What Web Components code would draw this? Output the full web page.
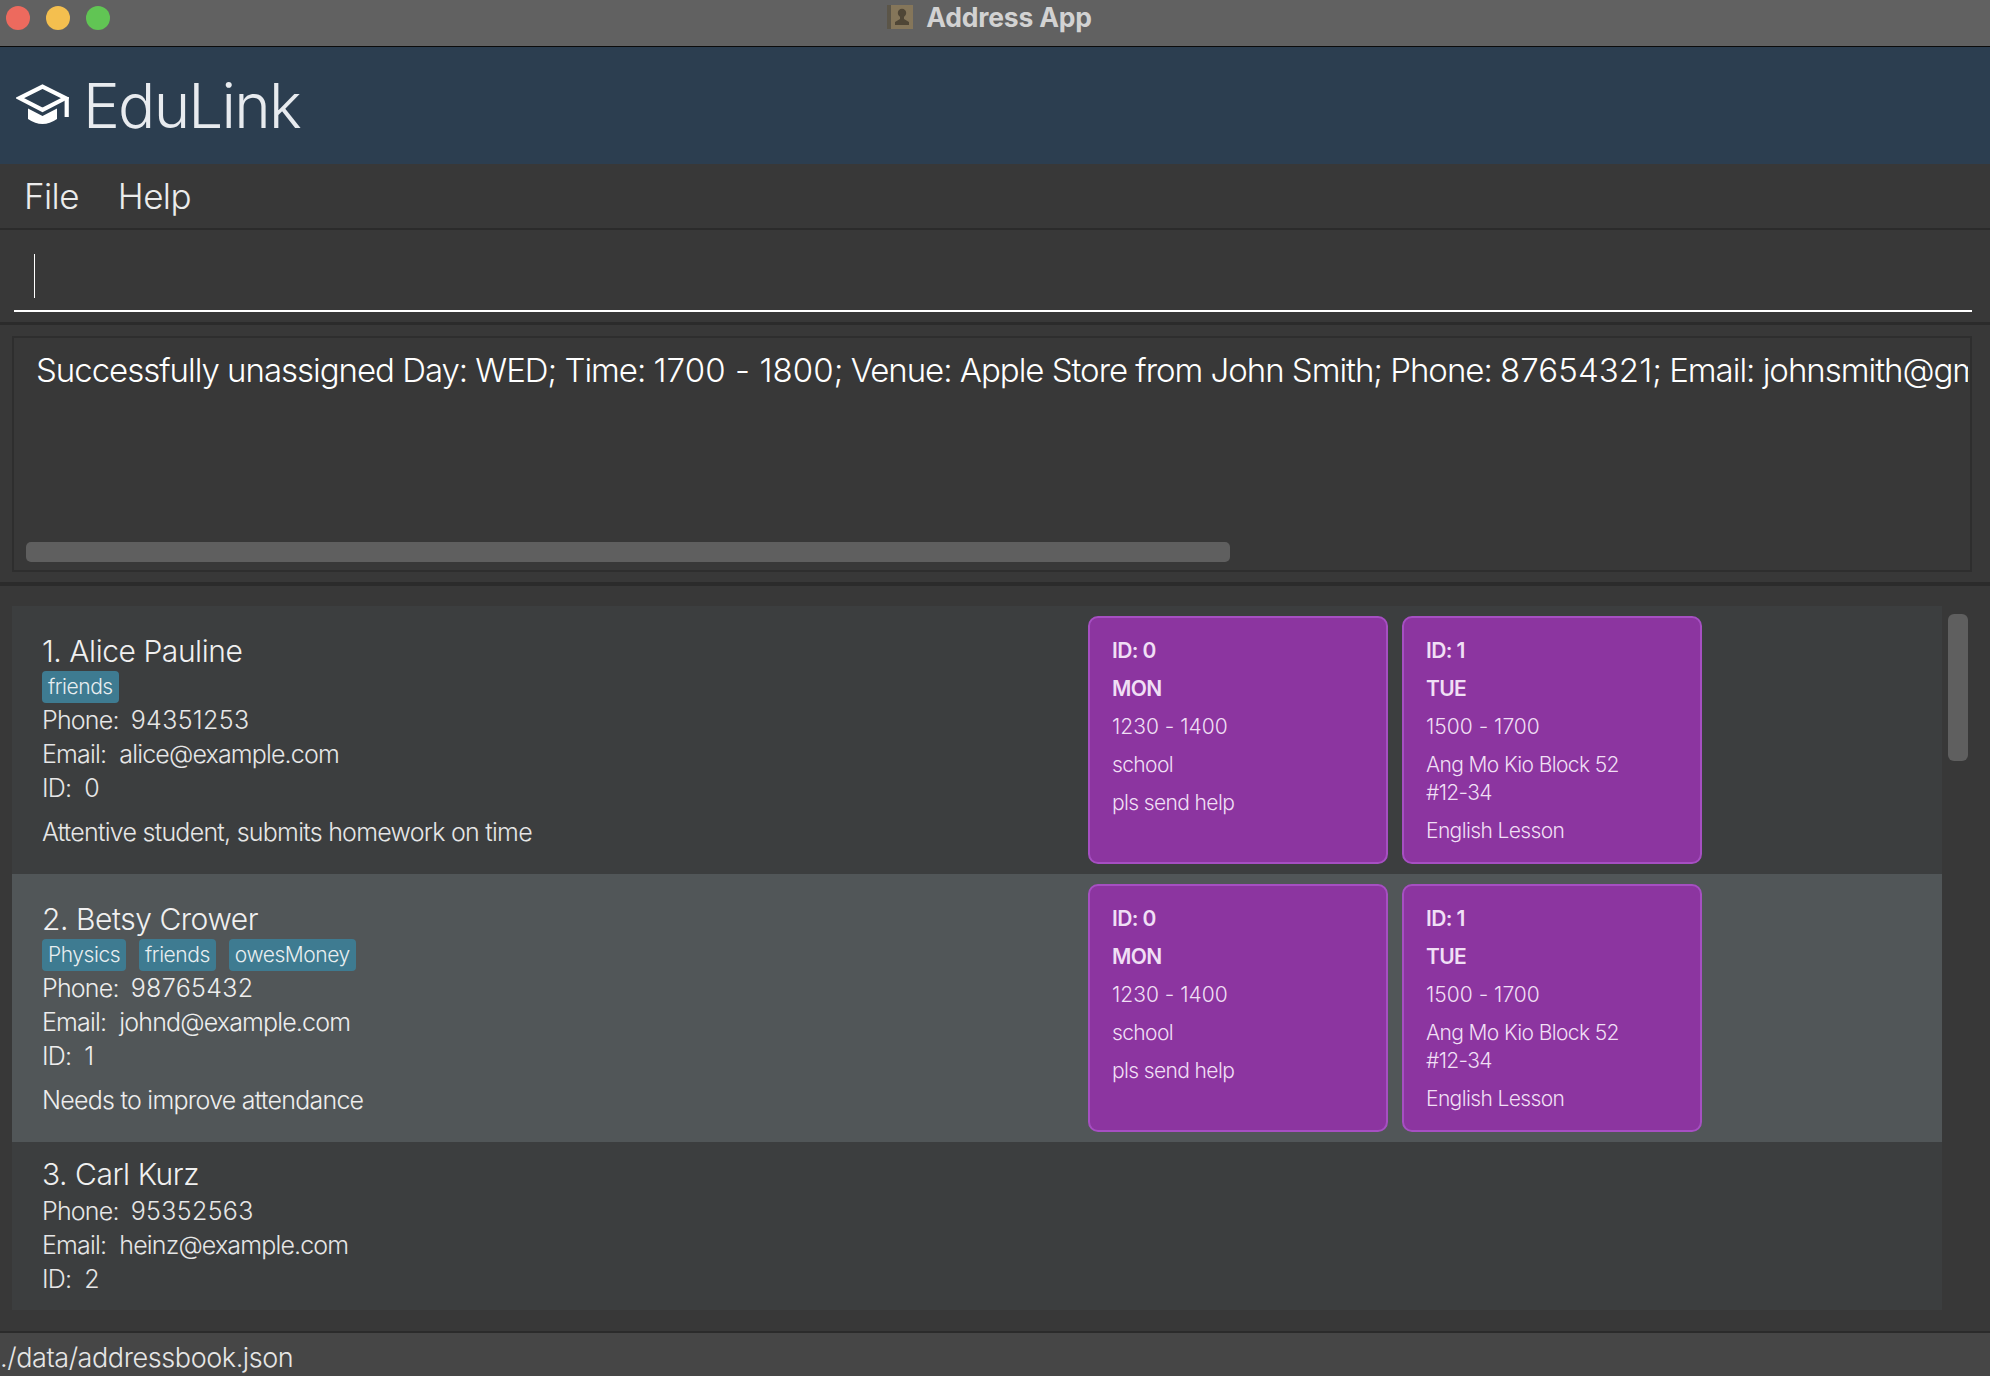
<!DOCTYPE html>
<html>
<head>
<meta charset="utf-8">
<title>Address App</title>
<style>
  html, body { margin: 0; height: 100%; background: #383838; overflow: hidden; }
  body { font-family: Inter, "Noto Sans", "Liberation Sans", sans-serif; font-weight: 300; color: #fff; }
</style>
</head>
<body>
<edu-app>
  <title-bar title="Address App"></title-bar>
  <brand-header name="EduLink"></brand-header>
  <menu-bar><span>File</span><span>Help</span></menu-bar>
  <command-box></command-box>
  <result-display>Successfully unassigned Day: WED; Time: <span>1700 - 1800</span>; Venue: Apple Store from John Smith; Phone: <span>87654321</span>; Email: johnsmith@gmail.com</result-display>
  <person-list>
    <person-card index="1" name="Alice Pauline" tags="friends" phone="94351253" email="alice@example.com" pid="0" note="Attentive student, submits homework on time">
      <lesson-card slot="lessons" lid="0" day="MON" time="1230 - 1400" venue="school" subject="pls send help"></lesson-card>
      <lesson-card slot="lessons" lid="1" day="TUE" time="1500 - 1700" venue="Ang Mo Kio Block 52 #12-34" subject="English Lesson"></lesson-card>
    </person-card>
    <person-card alt index="2" name="Betsy Crower" tags="Physics,friends,owesMoney" phone="98765432" email="johnd@example.com" pid="1" note="Needs to improve attendance">
      <lesson-card slot="lessons" lid="0" day="MON" time="1230 - 1400" venue="school" subject="pls send help"></lesson-card>
      <lesson-card slot="lessons" lid="1" day="TUE" time="1500 - 1700" venue="Ang Mo Kio Block 52 #12-34" subject="English Lesson"></lesson-card>
    </person-card>
    <person-card short index="3" name="Carl Kurz" phone="95352563" email="heinz@example.com" pid="2"></person-card>
  </person-list>
  <status-bar>./data/addressbook.json</status-bar>
</edu-app>

<script>
class EduApp extends HTMLElement {
  constructor() {
    super();
    this.attachShadow({ mode: 'open' }).innerHTML = `
      <style>
        :host { display: flex; flex-direction: column; width: 1990px; height: 1376px; overflow: hidden; }
      </style>
      <slot></slot>
    `;
  }
}

class TitleBar extends HTMLElement {
  constructor() {
    super();
    this.attachShadow({ mode: 'open' }).innerHTML = `
      <style>
        :host { display: block; height: 46px; flex: none; background: #616161; border-bottom: 1px solid #0c0c0c; position: relative; }
        .dots { position: absolute; left: 6px; top: 6px; display: flex; gap: 16px; }
        .dots i { width: 24px; height: 24px; border-radius: 50%; display: block; }
        .center { display: flex; justify-content: center; align-items: center; height: 34px; gap: 12px; padding-right: 12px; }
        .name { font: 700 26.5px Inter, sans-serif; color: #d2d2d2; letter-spacing: -0.2px; }
        svg { display: block; }
      </style>
      <div class="dots">
        <i style="background:#ed6a5e"></i><i style="background:#f4bf4f"></i><i style="background:#61c554"></i>
      </div>
      <div class="center">
        <svg width="28" height="26" viewBox="0 0 28 26">
          <rect x="1" y="1" width="26" height="24" fill="#85765a"/>
          <rect x="1" y="1" width="4" height="24" fill="#5b5548"/>
          <circle cx="16" cy="9" r="4.2" fill="#4f4636"/>
          <path d="M14 12h4v3l5 3v3H9v-3l5-3z" fill="#4f4636"/>
        </svg>
        <span class="name">${this.getAttribute('title')}</span>
      </div>
    `;
  }
}

class BrandHeader extends HTMLElement {
  constructor() {
    super();
    this.attachShadow({ mode: 'open' }).innerHTML = `
      <style>
        :host { display: flex; align-items: center; height: 117px; flex: none; background: #2c3e50; padding-left: 16px; gap: 14px; box-sizing: border-box; }
        svg { display: block; flex: none; margin-top: -2px; }
        .name { font-size: 62px; font-weight: 300; color: #e8ebef; letter-spacing: -1.8px; line-height: 1; }
      </style>
      <svg width="53" height="41" viewBox="16 85 53 41">
        <path d="M42.5 87.6 65.5 99 42.5 110.8 19.5 99Z" fill="none" stroke="#fff" stroke-width="4.2"/>
        <rect x="64.6" y="98" width="4.2" height="20" fill="#fff"/>
        <path d="M28 109.5 42.5 117 57 109.5V120Q42.5 130 28 120Z" fill="#fff"/>
      </svg>
      <span class="name">${this.getAttribute('name')}</span>
    `;
  }
}

class MenuBar extends HTMLElement {
  constructor() {
    super();
    this.attachShadow({ mode: 'open' }).innerHTML = `
      <style>
        :host { display: flex; align-items: center; height: 66px; flex: none; box-sizing: border-box; background: #383838; border-bottom: 2px solid #2b2b2b; padding-left: 24px; gap: 39px; font-size: 35px; font-weight: 300; color: #ececec; letter-spacing: -0.6px; }
      </style>
      <slot></slot>
    `;
  }
}

class CommandBox extends HTMLElement {
  constructor() {
    super();
    this.attachShadow({ mode: 'open' }).innerHTML = `
      <style>
        :host { display: block; height: 95px; flex: none; box-sizing: border-box; background: #383838; border-bottom: 3px solid #2b2b2b; padding: 24px 18px 0 14px; }
        .field { height: 58px; box-sizing: border-box; border-bottom: 2px solid #fff; padding: 0 0 12px 20px; }
        .caret { display: block; width: 1px; height: 44px; background: #fff; }
      </style>
      <div class="field"><span class="caret"></span></div>
    `;
  }
}

class ResultDisplay extends HTMLElement {
  constructor() {
    super();
    this.attachShadow({ mode: 'open' }).innerHTML = `
      <style>
        :host { display: block; height: 261px; flex: none; box-sizing: border-box; background: #383838; border-bottom: 4px solid #2b2b2b; padding: 11px 18px 10px 12px; }
        .box { height: 236px; box-sizing: border-box; border: 2px solid #2e2e2e; display: flex; flex-direction: column; padding: 0 2px 8px 13px; }
        .text { flex: 1; min-height: 0; overflow: hidden; white-space: nowrap; padding: 10px 0 0 9px; font-size: 33px; font-weight: 300; line-height: 44px; color: #fff; letter-spacing: -1.02px; }
        ::slotted(span) { letter-spacing: 0.1px; }
        .thumb { width: 1204px; height: 20px; flex: none; background: #5f5f5f; border-radius: 5px; margin-left: -1px; }
      </style>
      <div class="box">
        <div class="text"><slot></slot></div>
        <div class="thumb"></div>
      </div>
    `;
  }
}

class PersonList extends HTMLElement {
  constructor() {
    super();
    this.attachShadow({ mode: 'open' }).innerHTML = `
      <style>
        :host { display: flex; height: 745px; flex: none; box-sizing: border-box; background: #383838; padding: 20px 22px 20px 12px; }
        .rows { width: 1930px; flex: none; display: flex; flex-direction: column; }
        .track { flex: none; width: 20px; margin-left: 6px; padding-top: 8px; }
        .thumb { height: 147px; background: #5f5f5f; border-radius: 6px; }
      </style>
      <div class="rows"><slot></slot></div>
      <div class="track"><div class="thumb"></div></div>
    `;
  }
}

class PersonCard extends HTMLElement {
  constructor() {
    super();
    const tags = (this.getAttribute('tags') || '').split(',').filter(Boolean);
    const tagRow = tags.length
      ? `<div class="tags">${tags.map((t) => `<span>${t}</span>`).join('')}</div>`
      : '';
    const note = this.getAttribute('note');
    this.attachShadow({ mode: 'open' }).innerHTML = `
      <style>
        :host { display: flex; height: 268px; flex: none; box-sizing: border-box; background: #3c3e3f; padding: 10px 0 10px 30px; color: #e6e6e6; }
        :host([alt]) { background: #515658; color: #ededed; }
        :host([short]) { height: 168px; }
        .info { width: 1046px; flex: none; }
        .name { font-size: 30px; line-height: 39px; margin-top: 16px; color: #f0f0f0; letter-spacing: -0.45px; }
        :host([short]) .name { margin-top: 3px; }
        .tags { display: flex; gap: 13px; height: 32px; }
        .tags span { background: #3e7b91; border-radius: 4px; padding: 0 6px; font-size: 21px; line-height: 32px; color: #e8eef0; letter-spacing: -0.45px; }
        .line { font-size: 25px; line-height: 34px; }
        .line b { font-weight: 300; margin-right: 13px; letter-spacing: -0.8px; }
        .line.phone b { margin-right: 12px; }
        .digits { letter-spacing: 0.35px; }
        .mail { letter-spacing: -0.85px; }
        .note { font-size: 25px; line-height: 34px; margin-top: 10px; letter-spacing: -0.75px; }
        .lessons { display: flex; gap: 14px; }
      </style>
      <div class="info">
        <div class="name">${this.getAttribute('index')}. ${this.getAttribute('name')}</div>
        ${tagRow}
        <div class="line phone"><b>Phone:</b><span class="digits">${this.getAttribute('phone')}</span></div>
        <div class="line"><b>Email:</b><span class="mail">${this.getAttribute('email')}</span></div>
        <div class="line"><b>ID:</b><span class="digits">${this.getAttribute('pid')}</span></div>
        ${note ? `<div class="note">${note}</div>` : ''}
      </div>
      <div class="lessons"><slot name="lessons"></slot></div>
    `;
  }
}

class LessonCard extends HTMLElement {
  constructor() {
    super();
    this.attachShadow({ mode: 'open' }).innerHTML = `
      <style>
        :host { display: flex; flex-direction: column; gap: 11px; width: 300px; height: 248px; box-sizing: border-box; background: #8c35a0; border: 2px solid #a64fc2; border-radius: 10px; padding: 19px 50px 0 22px; font-size: 21px; line-height: 27px; color: #f0dff5; letter-spacing: -0.62px; }
        .strong { font-weight: 600; letter-spacing: -0.6px; }
        .digits { letter-spacing: 0.02px; }
        .venue { line-height: 28px; margin-bottom: -1px; }
      </style>
      <div class="strong">ID: ${this.getAttribute('lid')}</div>
      <div class="strong">${this.getAttribute('day')}</div>
      <div class="digits">${this.getAttribute('time')}</div>
      <div class="venue">${this.getAttribute('venue')}</div>
      <div>${this.getAttribute('subject')}</div>
    `;
  }
}

class StatusBar extends HTMLElement {
  constructor() {
    super();
    this.attachShadow({ mode: 'open' }).innerHTML = `
      <style>
        :host { display: block; flex: 1; box-sizing: border-box; background: #464646; border-top: 2px solid #2b2b2b; font-size: 27px; line-height: 50px; color: #e6e6e6; letter-spacing: -0.42px; }
      </style>
      <slot></slot>
    `;
  }
}

customElements.define('edu-app', EduApp);
customElements.define('title-bar', TitleBar);
customElements.define('brand-header', BrandHeader);
customElements.define('menu-bar', MenuBar);
customElements.define('command-box', CommandBox);
customElements.define('result-display', ResultDisplay);
customElements.define('person-list', PersonList);
customElements.define('person-card', PersonCard);
customElements.define('lesson-card', LessonCard);
customElements.define('status-bar', StatusBar);
</script>
</body>
</html>
